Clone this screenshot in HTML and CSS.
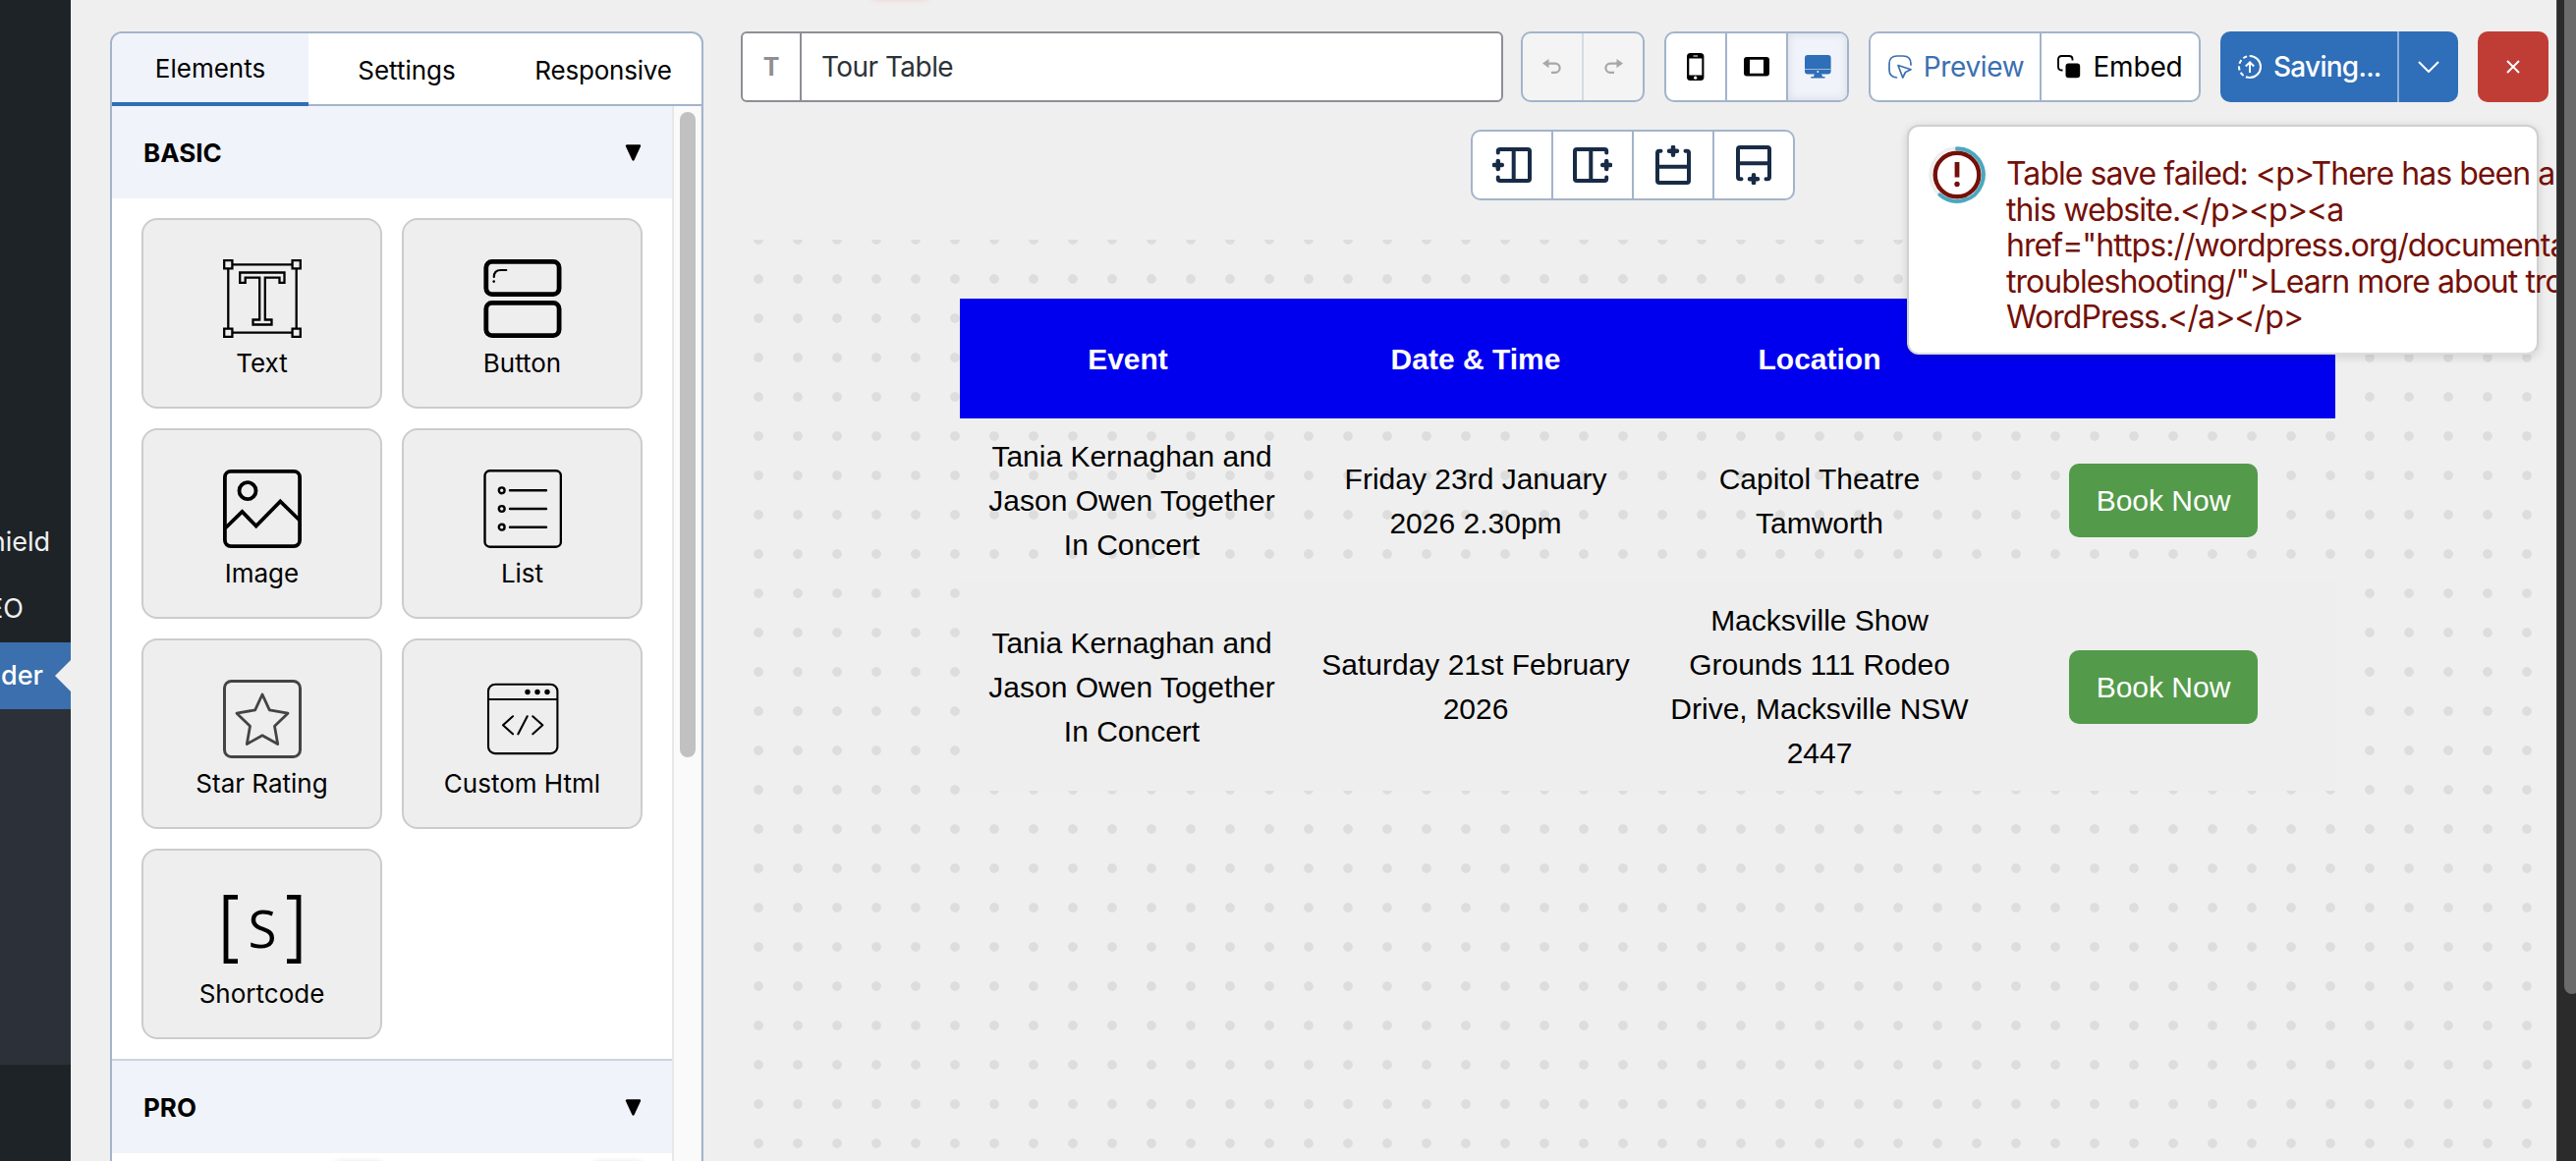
FILE: index.html
```html
<!DOCTYPE html>
<html lang="en">
<head>
<meta charset="utf-8">
<title>Tour Table</title>
<link rel="stylesheet" href="styles.css">
</head>
<body>
<div class="app">
  <nav class="menu">
    <div class="menu-item"><span>Shield</span></div>
    <div class="menu-item"><span>SEO</span></div>
    <div class="menu-item current"><span>Builder</span></div>
    <div class="submenu"></div>
  </nav>

  <aside class="panel">
    <div class="tabs">
      <div class="tab active"><span>Elements</span></div>
      <div class="tab"><span>Settings</span></div>
      <div class="tab wide"><span>Responsive</span></div>
    </div>
    <div class="panel-body">
      <div class="sections">
        <div class="section-head"><span>BASIC</span><svg width="17" height="17" viewBox="0 0 17 17"><path d="M2 1.500h13L8.500 15.500z" stroke="#000" stroke-width="2.400" stroke-linejoin="round"/></svg></div>
        <div class="cards">
          <div class="card">
            <svg width="80" height="80" viewBox="0 0 80 80" fill="none" stroke="#000" stroke-width="2.300"><path d="M5.300 5.300h69.400v69.400H5.300z"/><g fill="#eee"><path d="M1.200 1.200h8.200v8.200H1.200zM70.600 1.200h8.200v8.200h-8.200zM1.200 70.600h8.200v8.200H1.200zM70.600 70.600h8.200v8.200h-8.200z"/></g><path d="M17.200 13.500h45.300v10.300h-5v-5.100H42.800v42.800h6.700v5h-19v-5h6.700V18.700H22.700v5.100h-5.500z"/></svg>
            <span>Text</span>
          </div>
          <div class="card">
            <svg width="80" height="80" viewBox="0 0 80 80" fill="none" stroke="#000" stroke-width="4.800"><rect x="2.800" y="2.400" width="74.300" height="33.200" rx="6"/><rect x="2.800" y="44.400" width="74.300" height="33.200" rx="6"/><path d="M23.300 11h-5.500q-7 0-7 7" stroke-width="2.200" stroke-linecap="round"/><circle cx="10.700" cy="22.600" r="1.300" fill="#000" stroke="none"/></svg>
            <span>Button</span>
          </div>
          <div class="card">
            <svg width="80" height="80" viewBox="0 0 80 80" fill="none" stroke="#000" stroke-width="3.800"><rect x="1.900" y="1.900" width="76.200" height="76.200" rx="6"/><circle cx="25" cy="21.700" r="8.500"/><path d="M2.500 59.500l17-16.500 14.200 14.500L58.300 32.500l19.500 19"/></svg>
            <span>Image</span>
          </div>
          <div class="card">
            <svg width="80" height="80" viewBox="0 0 80 80" fill="none" stroke="#000" stroke-width="2.400"><rect x="1.500" y="1.300" width="77.400" height="77.400" rx="5"/><g><circle cx="18.700" cy="21.300" r="2.900"/><circle cx="18.700" cy="40" r="2.900"/><circle cx="18.700" cy="58.700" r="2.900"/></g><path d="M27 21.300h37M27 40h37M27 58.700h37" stroke-linecap="round"/></svg>
            <span>List</span>
          </div>
          <div class="card">
            <svg width="80" height="80" viewBox="0 0 80 80" fill="none" stroke="#444" stroke-width="3"><rect x="1.500" y="1.500" width="77" height="77" rx="7"/><path d="M40 15l7.300 15.800L66 34.200 52.500 47.200 55.700 65.500 40 56.700 24.300 65.500 27.500 47.200 14 34.200 32.700 30.800z" stroke-width="2.800" stroke-linejoin="round"/></svg>
            <span>Star Rating</span>
          </div>
          <div class="card">
            <svg width="80" height="80" viewBox="0 0 80 80" fill="none" stroke="#000" stroke-width="2.100" stroke-linecap="round" stroke-linejoin="round"><rect x="5" y="4.700" width="70.400" height="70.400" rx="7"/><path d="M5 20h70M30 37.300l-10 9 10 9M44.700 37.300l-9.300 18M50.300 37.300l10 9-10 9"/><g fill="#000" stroke="none"><circle cx="45" cy="12.500" r="2.700"/><circle cx="55" cy="12.500" r="2.700"/><circle cx="65" cy="12.500" r="2.700"/></g></svg>
            <span>Custom Html</span>
          </div>
          <div class="card">
            <svg width="80" height="80" viewBox="0 0 80 80"><path d="M15 7.300H3v65.300h12M65 7.300h12v65.300H65" fill="none" stroke="#000" stroke-width="4.800"/><text x="40" y="59" text-anchor="middle" class="s-mark">S</text></svg>
            <span>Shortcode</span>
          </div>
        </div>
        <div class="section-head ruled"><span>PRO</span><svg width="17" height="17" viewBox="0 0 17 17"><path d="M2 1.500h13L8.500 15.500z" stroke="#000" stroke-width="2.400" stroke-linejoin="round"/></svg></div>
        <div class="more"><i></i><i></i></div>
      </div>
      <div class="track"><div class="thumb"></div></div>
    </div>
  </aside>

  <main class="main">
    <div class="glow"></div>
    <header class="bar">
      <div class="title"><div class="title-icon">T</div><div class="title-text"><span>Tour Table</span></div></div>
      <div class="group history">
        <div class="cell"><svg width="20" height="16" viewBox="0 0 20 16"><path d="M0 4.600L6.500 0v9.200z" fill="#a7a7a7"/><path d="M5 4.600h8a4.600 4.600 0 0 1 0 9.200H9" fill="none" stroke="#a7a7a7" stroke-width="2.200"/></svg></div>
        <div class="cell"><svg width="20" height="16" viewBox="0 0 20 16"><path d="M20 4.600L13.500 0v9.200z" fill="#a7a7a7"/><path d="M15 4.600H7a4.600 4.600 0 0 0 0 9.200h4" fill="none" stroke="#a7a7a7" stroke-width="2.200"/></svg></div>
      </div>
      <div class="group devices">
        <div class="cell"><svg width="18" height="28" viewBox="0 0 18 28"><rect width="17.400" height="28" rx="3.500"/><path d="M2.300 5.500h13v17h-13z" fill="#fff"/><circle cx="8.700" cy="25.200" r="1.600" fill="#fff"/><path d="M6.500 3h4.600" stroke="#fff"/></svg></div>
        <div class="cell"><svg width="26" height="20" viewBox="0 0 26 20"><rect width="26" height="19.400" rx="3"/><path d="M6 2.800h14v14H6z" fill="#fff"/></svg></div>
        <div class="cell on"><svg width="27" height="24" viewBox="0 0 27 24" fill="#2f6eb8"><rect width="26.600" height="19.500" rx="3"/><path d="M10 19h7l1 3h2.500v1.500H6.300V22H9z"/><path d="M0 14.500h26.600" stroke="#a9c3e2" stroke-width=".9"/><circle cx="13.300" cy="17" r=".9" fill="#fff"/></svg></div>
      </div>
      <div class="group share">
        <div class="cell preview"><svg width="24" height="24" viewBox="0 0 24 24" fill="none" stroke="#3a70b0" stroke-width="1.700" stroke-linecap="round" stroke-linejoin="round"><path d="M8.500 23C3 22.500 1 20 1 15V9q0-8 8-8h6q8 0 8 8v1"/><path d="M10 10.500l13 4.300-5.500 2.700-2.800 5.500z"/></svg><span>Preview</span></div>
        <div class="cell embed"><svg width="24" height="24" viewBox="0 0 24 24"><rect x="8.500" y="8.500" width="14.700" height="14.700" rx="3"/><path d="M5.500 15.500H4.500q-3.500 0-3.500-3.500V4.500Q1 1 4.500 1H12q3.500 0 3.500 3.500v1" fill="none" stroke="#000" stroke-width="1.900"/></svg><span>Embed</span></div>
      </div>
      <div class="save">
        <div class="save-main"><svg width="24" height="24" viewBox="0 0 24 24" fill="none" stroke="#fff" stroke-width="2"><path d="M12 1a11 11 0 0 1 0 22"/><path d="M12 23A11 11 0 0 1 12 1" stroke-dasharray="4.200 2.600"/><path d="M12 18V7.500M7.800 11.500L12 7.300l4.200 4.200"/></svg><span>Saving...</span></div>
        <div class="save-more"><svg width="22" height="12" viewBox="0 0 22 12" fill="none" stroke="#fff" stroke-width="2"><path d="M1 1l10 10L21 1"/></svg></div>
      </div>
      <div class="close"><svg width="14" height="14" viewBox="0 0 14 14" stroke="#fff" stroke-width="2"><path d="M1 1l12 12M13 1L1 13"/></svg></div>
    </header>

    <div class="tools">
      <div class="cell"><svg width="40" height="36" viewBox="0 0 40 36"><path d="M5.800 5.500V4q0-2 2-2H36q2 0 2 2v28q0 2-2 2H7.800q-2 0-2-2v-1.500M21.700 2v32"/><path class="plus" d="M5.800 14v8M1.800 18h8"/></svg></div>
      <div class="cell"><svg width="40" height="36" viewBox="0 0 40 36"><path d="M34.200 5.500V4q0-2-2-2H4Q2 2 2 4v28q0 2 2 2h28.200q2 0 2-2v-1.500M18.300 2v32"/><path class="plus" d="M34.200 14v8M30.200 18h8"/></svg></div>
      <div class="cell"><svg width="36" height="40" viewBox="0 0 36 40"><path d="M5.500 5.800H4q-2 0-2 2V36q0 2 2 2h28q2 0 2-2V7.800q0-2-2-2h-1.500M2 21.700h32"/><path class="plus" d="M18 1.800v8M14 5.800h8"/></svg></div>
      <div class="cell"><svg width="36" height="40" viewBox="0 0 36 40"><path d="M5.500 34.200H4q-2 0-2-2V4q0-2 2-2h28q2 0 2 2v28.200q0 2-2 2h-1.500M2 18.300h32"/><path class="plus" d="M18 30.200v8M14 34.200h8"/></svg></div>
    </div>

    <section class="canvas">
      <table class="tour">
        <tr><th class="first">Event</th><th>Date &amp; Time</th><th>Location</th><th></th></tr>
        <tr><td>Tania Kernaghan and<br>Jason Owen Together<br>In Concert</td><td>Friday 23rd January<br>2026 2.30pm</td><td>Capitol Theatre<br>Tamworth</td><td><a class="book">Book Now</a></td></tr>
        <tr class="alt"><td>Tania Kernaghan and<br>Jason Owen Together<br>In Concert</td><td>Saturday 21st February<br>2026</td><td>Macksville Show<br>Grounds 111 Rodeo<br>Drive, Macksville NSW<br>2447</td><td><a class="book">Book Now</a></td></tr>
      </table>
    </section>

    <div class="toast">
      <svg width="58" height="58" viewBox="0 0 58 58" fill="none"><circle cx="29" cy="29" r="27" stroke="#eee" stroke-width="3.500"/><path d="M29 2.200a26.800 26.800 0 1 1-17.500 47.100" stroke="#4aa8c0" stroke-width="4" stroke-linecap="round"/><circle cx="29" cy="29" r="22.300" stroke="#741008" stroke-width="4.400" fill="#fff"/><path d="M29 16v15.500" stroke="#741008" stroke-width="4.800"/><circle cx="29" cy="38.500" r="2.700" fill="#741008"/></svg>
      <div class="toast-text">Table save failed: &lt;p&gt;There has been a critical error on<br>this website.&lt;/p&gt;&lt;p&gt;&lt;a<br>href="https://wordpress.org/documentation/article/faq-<br>troubleshooting/"&gt;Learn more about troubleshooting<br>WordPress.&lt;/a&gt;&lt;/p&gt;</div>
    </div>
  </main>

  <div class="page-scroll"><div class="page-thumb"></div></div>
</div>
</body>
</html>
```
FILE: styles.css
```css
* { box-sizing: border-box; }
html, body { margin: 0; height: 100%; overflow: hidden; }
body { font-family: Inter, "Liberation Sans", sans-serif; color: #000; background: #efefef; }
svg { display: block; flex: none; }
.app { display: flex; width: 2622px; height: 1182px; overflow: hidden; }

/* admin menu */
.menu { width: 72px; flex: none; background: #1d2327; padding-top: 518px; overflow: hidden; }
.menu-item { height: 68px; display: flex; align-items: center; justify-content: flex-end; color: #f0f0f1; font-size: 27px; white-space: nowrap; padding: 0 21px 2px 0; }
.menu-item:nth-child(2) { padding-right: 48px; }
.menu-item.current { position: relative; background: #3b6fad; color: #fff; font-weight: 500; padding-right: 28px; }
.menu-item.current::after { content: ""; position: absolute; right: 0; top: 18px; border: 16px solid transparent; border-left: 0; border-right-color: #efefef; }
.submenu { height: 362px; background: #2c3038; }

/* element panel */
.panel { width: 604px; height: 1200px; flex: none; margin: 32px 38px 0 40px; border: 2px solid #a3b4cb; border-radius: 12px 12px 0 0; background: #fff; overflow: hidden; }
.tabs { height: 74px; display: grid; grid-template-columns: repeat(3, 200px); border-bottom: 2px solid #a3b4cb; }
.tab { height: 74px; display: flex; align-items: center; justify-content: center; font-size: 26px; }
.tab.active { background: #f0f3f9; border-bottom: 4px solid #2f6eb8; }
.tab.wide { letter-spacing: -.2px; }
.panel-body { display: flex; }
.sections { width: 570px; }
.section-head { height: 94px; background: #f0f3f9; display: flex; align-items: center; justify-content: space-between; padding: 0 31px 0 32px; font-size: 26px; font-weight: 700; }
.section-head.ruled { height: 96px; border-top: 2px solid #c9d5dc; }
.cards { padding: 20px 30px; display: grid; grid-template-columns: 1fr 1fr; gap: 20px; }
.card { height: 194px; border: 2px solid #ccc; border-radius: 16px; background: #eee; display: flex; flex-direction: column; align-items: center; padding-top: 40px; gap: 9px; font-size: 26px; line-height: 34px; }
.s-mark { font-family: "Open Sans", sans-serif; font-size: 53px; }
.more { display: flex; gap: 208px; padding: 9px 0 0 223px; }
.more i { width: 56px; height: 20px; border-radius: 10px; box-shadow: 0 0 6px #ddd; }
.track { width: 30px; height: 1092px; background: #fafafa; border-left: 2px solid #e8e8e8; border-right: 1px solid #eee; padding: 6px 0 0 6px; }
.thumb { width: 16px; height: 657px; border-radius: 8px; background: #c1c1c1; }

/* builder area */
.main { position: relative; width: 1848px; flex: none; padding-top: 32px; overflow: hidden; }
.glow { position: absolute; left: 134px; top: -14px; width: 56px; height: 10px; border-radius: 5px; box-shadow: 0 0 7px 2px #f3b6b6; }
.bar { display: flex; height: 72px; }
.cell { display: flex; align-items: center; justify-content: center; }
.title { width: 776px; display: flex; background: #fff; border: 2px solid #8f8e96; border-radius: 6px; }
.title-icon { width: 60px; border-right: 2px solid #8f8e96; display: flex; align-items: center; justify-content: center; color: #8f8e96; font-size: 25px; font-weight: 700; }
.title-text { display: flex; align-items: center; padding-left: 20px; font-size: 28px; letter-spacing: -.55px; color: #2c3338; }
.group { display: flex; border: 2px solid #a3b4cb; border-radius: 10px; background: #fff; overflow: hidden; }
.group .cell + .cell { border-left: 2px solid #a3b4cb; }
.history { width: 126px; margin-left: 18px; background: #f4f4f4; }
.history .cell { flex: 1; }
.history .cell + .cell { border-left-color: #d3dbe4; }
.devices { width: 188px; margin-left: 20px; }
.devices .cell { width: 60px; }
.devices .cell + .cell { width: 62px; }
.devices .on { background: #f0f3f9; box-shadow: inset 0 0 8px #d4d8df; }
.share { width: 338px; margin-left: 20px; font-size: 28px; }
.share .cell { gap: 12px; }
.preview { width: 172px; padding-left: 2px; color: #3a70b0; letter-spacing: -.35px; }
.embed { flex: 1; letter-spacing: -.15px; }
.save { width: 242px; margin-left: 20px; display: flex; background: #2f6eb8; border-radius: 10px; color: #fff; font-size: 28px; font-weight: 500; letter-spacing: -.75px; }
.save-main { width: 180px; display: flex; align-items: center; padding-left: 18px; gap: 12px; }
.save-more { width: 62px; border-left: 2px solid #8fb2da; display: flex; align-items: center; justify-content: center; }
.close { width: 72px; margin-left: 20px; background: #c03d35; border-radius: 10px; display: flex; align-items: center; justify-content: center; }

.tools { display: flex; width: 330px; height: 72px; margin: 28px 0 0 743px; background: #fff; border: 2px solid #a3b4cb; border-radius: 10px; }
.tools .cell { width: 80px; }
.tools .cell + .cell { width: 82px; border-left: 2px solid #a3b4cb; }
.tools path { fill: none; stroke: #172b45; stroke-width: 4; stroke-linecap: round; }
.tools .plus { stroke-width: 4.500; }

.canvas { height: 938px; margin: 40px 0 0 -2px; padding: 60px 0 0 225px; background: radial-gradient(circle at 20px 20px, #ddd 4.400px, transparent 5.200px) 0 -20px / 40px 40px; }
.tour { width: 1400px; table-layout: fixed; border-collapse: collapse; font: 30px/45px "Liberation Sans", Arial, sans-serif; text-align: center; }
.tour th { height: 122px; padding: 0; background: #0000ee; color: #fff; font-weight: 700; }
.tour th.first { padding-right: 8px; }
.tour td { padding: 16px 0; vertical-align: middle; }
.tour .alt { background: #eee; }
.book { display: block; width: 192px; height: 75px; margin: 0 auto; padding: 15px 0; background: #539a4a; color: #fff; border-radius: 10px; }

.toast { position: absolute; left: 1187px; top: 127px; width: 643px; height: 234px; background: #fff; border: 2px solid #d0d0d0; border-bottom-color: #ddd; border-radius: 12px; box-shadow: 0 2px 10px rgba(0,0,0,.14); display: flex; padding: 20px 0 0 20px; }
.toast-text { margin: 10px 0 0 21px; font-size: 32px; line-height: 36.500px; letter-spacing: -.95px; color: #741008; white-space: nowrap; }

/* window scrollbar */
.page-scroll { width: 20px; background: #2b2b2b; border-left: 1px solid #444; overflow: hidden; padding-left: 7px; }
.page-thumb { width: 16px; height: 1012px; background: #6b6b6b; border-radius: 0 0 8px 8px; }
```
